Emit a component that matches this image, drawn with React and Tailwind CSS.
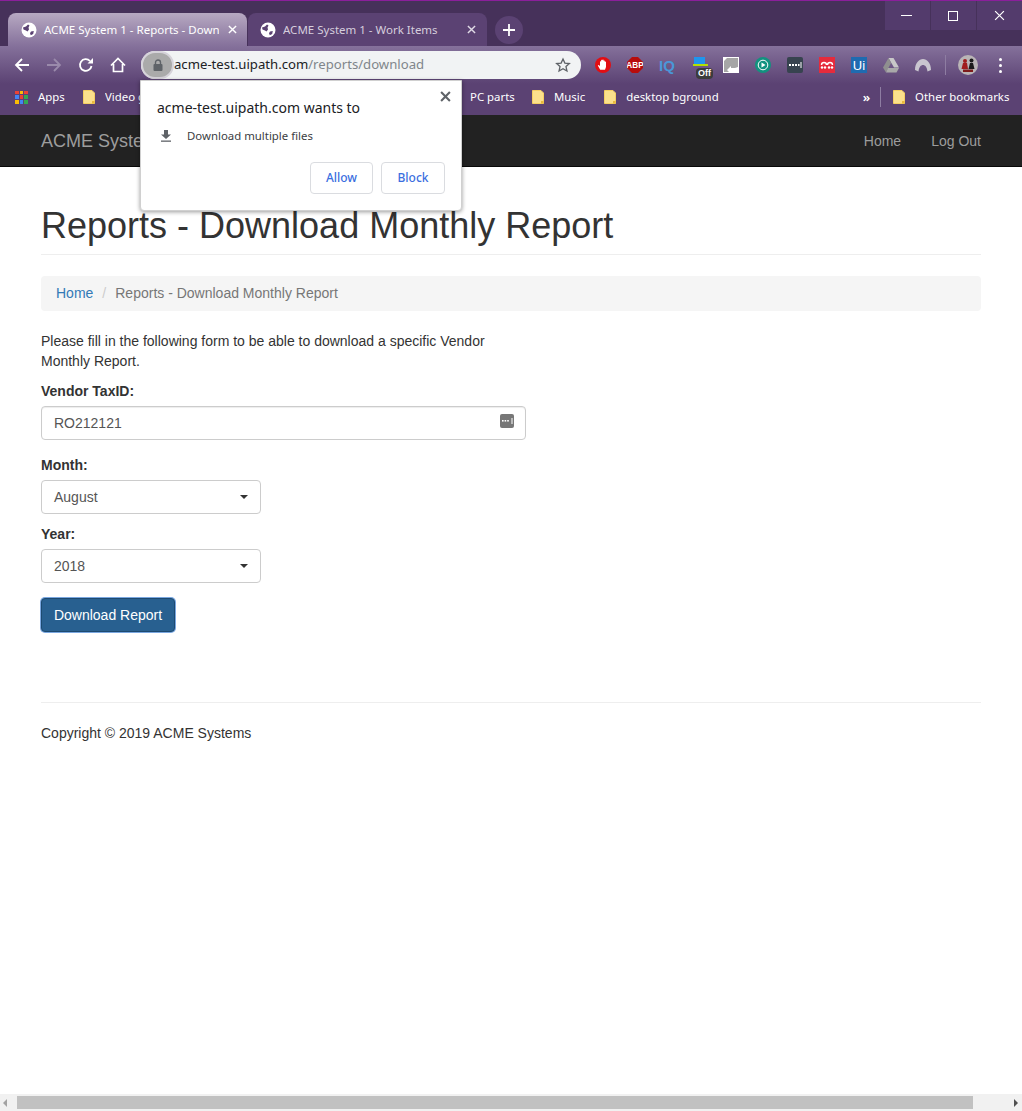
const UI = { fontFamily: '"Noto Sans", "Open Sans", sans-serif' };
const PAGE = { fontFamily: '"Liberation Sans", Arial, sans-serif' };

function Globe() {
  return (
    <svg width="16" height="16" viewBox="0 0 16 16" className="shrink-0">
      <circle cx="8" cy="8" r="7.5" fill="#fff" />
      <path d="M2 5.5 L5 4.5 L7 2.5 L8.5 3.5 L7.5 5.5 L8 7.5 L6.5 9.5 L5 8.5 L2.5 7.5Z M10 9.5 L12.8 9 L12.2 12 L9.8 13.2 L9 11.2Z" fill="#5b4273" />
    </svg>
  );
}

function CloseX({ size = 10, color = "#fff", width = 1.6 }) {
  return (
    <svg width={size} height={size} viewBox="0 0 10 10" className="shrink-0">
      <path d="M1 1 L9 9 M9 1 L1 9" stroke={color} strokeWidth={width} fill="none" />
    </svg>
  );
}

function Tab({ title, active }) {
  return (
    <div
      className={
        active
          ? "relative flex h-[33px] w-[239px] items-center rounded-t-lg bg-gradient-to-b from-[#b7a9c2] to-[#85719b] pl-[13px] pr-[10px]"
          : "flex h-[33px] w-[239px] items-center rounded-t-lg bg-[#5b4273] pl-[12px] pr-[11px]"
      }
    >
      <Globe />
      <span className={"ml-[7px] mr-[9px] flex-1 overflow-hidden whitespace-nowrap text-[11.5px] " + (active ? "text-white" : "text-[#d6cedd]")}>
        {title}
      </span>
      <CloseX size={9} color={active ? "#fff" : "#e0dae6"} />
    </div>
  );
}

function Folder() {
  return (
    <svg width="12" height="14" viewBox="0 0 12 14" className="shrink-0">
      <path d="M0.5 0.5 H9 L11.5 3 V13.5 H0.5Z" fill="#fbe08c" stroke="#f5cf62" />
      <rect x="9" y="11" width="2.5" height="2.5" fill="#e8b93c" />
    </svg>
  );
}

function Bookmark({ label, className = "", textClass = "" }) {
  return (
    <div className={"flex shrink-0 items-center gap-[10px] " + className}>
      <Folder />
      <span className={"whitespace-nowrap text-[11.4px] text-white " + textClass}>{label}</span>
    </div>
  );
}

function AppsGrid() {
  const colors = ["#ea4335", "#fbbc05", "#ea4335", "#4285f4", "#ea4335", "#34a853", "#fbbc05", "#4285f4", "#34a853"];
  return (
    <div className="grid h-[13px] w-[13px] shrink-0 grid-cols-3 gap-[1px]">
      {colors.map((c, i) => (
        <div key={i} style={{ background: c }} />
      ))}
    </div>
  );
}

function Extensions() {
  return (
    <div className="ml-[14px] flex items-center">
      <svg width="16" height="16" viewBox="0 0 16 16" className="shrink-0">
        <circle cx="8" cy="8" r="8" fill="#e20e13" />
        <path d="M5.2 12.8 L2.8 8.6 L3.6 8 L5 9 V4.6 A0.6 0.6 0 0 1 6.1 4.6 V3.4 A0.6 0.6 0 0 1 7.4 3.4 V7 V3.1 A0.6 0.6 0 0 1 8.6 3.1 V4 A0.6 0.6 0 0 1 9.8 4 V5 A0.6 0.6 0 0 1 11 5 V10 L10 12.8Z" fill="#fff" />
      </svg>
      <svg width="16" height="16" viewBox="0 0 16 16" className="ml-[16px] shrink-0">
        <path d="M5 0 H11 L16 5 V11 L11 16 H5 L0 11 V5Z" fill="#b80c0c" />
        <text x="8" y="11" textAnchor="middle" fontSize="8.2" fontWeight="700" fill="#fff" fontFamily="Liberation Sans">ABP</text>
      </svg>
      <span className="ml-[16px] w-[16px] text-center text-[15px] font-bold leading-none text-[#4a97d8]" style={PAGE}>IQ</span>
      <div className="relative ml-[18px] h-[16px] w-[16px] shrink-0">
        <div className="absolute left-[1px] top-0 h-[7px] w-[11px] bg-[#1f96ee]" />
        <div className="absolute left-0 top-[7px] h-[2px] w-[15px] bg-[#b4e000]" />
        <div className="absolute left-[3px] top-[11px] rounded-sm bg-[#3c3c3c] px-[2px] text-[9px] font-bold leading-[11px] text-white" style={PAGE}>Off</div>
      </div>
      <div className="ml-[14px] flex h-[16px] w-[16px] shrink-0 bg-white p-[1px]">
        <svg width="14" height="14" viewBox="0 0 14 14">
          <path d="M0 14 V3 L3 0 H14 V9 L11 10 H7 V8 L3 12 L5 14Z" fill="#a6a6a6" />
        </svg>
      </div>
      <svg width="16" height="16" viewBox="0 0 16 16" className="ml-[16px] shrink-0">
        <circle cx="8" cy="8" r="8" fill="#12927f" />
        <circle cx="8" cy="8" r="4.8" fill="none" stroke="#fff" strokeWidth="1" />
        <path d="M6.5 5.5 L10.5 8 L6.5 10.5Z" fill="#fff" />
      </svg>
      <svg width="16" height="16" viewBox="0 0 16 16" className="ml-[16px] shrink-0">
        <rect width="16" height="16" rx="2" fill="#37434f" />
        <rect x="2" y="7" width="2" height="2" fill="#fff" />
        <rect x="5" y="7" width="2" height="2" fill="#fff" />
        <rect x="8" y="7" width="2" height="2" fill="#fff" />
        <rect x="11" y="7" width="1.5" height="2" fill="#fff" />
        <rect x="13.5" y="5" width="1" height="6" fill="#fff" />
      </svg>
      <svg width="16" height="16" viewBox="0 0 16 16" className="ml-[16px] shrink-0">
        <rect width="16" height="16" fill="#e62b3c" />
        <path d="M2.5 8 A2.5 2.5 0 0 1 7.5 8 M8.5 8 A2.5 2.5 0 0 1 13.5 8" stroke="#fff" strokeWidth="1.4" fill="none" />
        <circle cx="3" cy="10.5" r="1.2" fill="#fff" />
        <circle cx="6" cy="10.5" r="1.2" fill="#fff" />
        <circle cx="10" cy="10.5" r="1.2" fill="#fff" />
        <circle cx="13" cy="10.5" r="1.2" fill="#fff" />
      </svg>
      <div className="ml-[16px] flex h-[16px] w-[16px] shrink-0 items-center justify-center bg-[#1f6bb0] text-[13px] leading-none text-white" style={PAGE}>Ui</div>
      <svg width="16" height="15" viewBox="0 0 16 15" className="ml-[16px] shrink-0">
        <path d="M5.5 0 H10.5 L16 9.5 H11Z" fill="#c8c8c8" />
        <path d="M5.5 0 L8 5 L3 14.5 L0 9.5Z" fill="#8f8f8f" />
        <path d="M5 10 H16 L13.5 14.5 H3Z" fill="#a9a9a9" />
      </svg>
      <svg width="16" height="14" viewBox="0 0 16 14" className="ml-[16px] shrink-0">
        <path d="M0 12 C0 5 4 1 8 1 C12 1 16 5 16 12 L12.5 13.5 C12 9 10 7 8 7 C6 7 4 9 3.5 13.5Z" fill="#c9c5cf" />
      </svg>
      <div className="ml-[14px] h-[20px] w-px bg-[#8e7da2]" />
      <svg width="20" height="20" viewBox="0 0 20 20" className="ml-[12px] shrink-0">
        <circle cx="10" cy="10" r="10" fill="#b9b4b6" />
        <circle cx="7" cy="6" r="2" fill="#a01c1c" />
        <path d="M3.5 14 L5 8 H9 L10 14Z" fill="#a01c1c" />
        <circle cx="13.5" cy="5.5" r="2" fill="#1a1a1a" />
        <path d="M10.5 14 L12 8 H15 L16.5 14Z" fill="#1a1a1a" />
        <rect x="5" y="14.5" width="10" height="2.5" fill="#7e1c1c" />
      </svg>
      <div className="ml-[21px] flex flex-col gap-[3px]">
        <div className="h-[3px] w-[3px] rounded-full bg-white" />
        <div className="h-[3px] w-[3px] rounded-full bg-white" />
        <div className="h-[3px] w-[3px] rounded-full bg-white" />
      </div>
    </div>
  );
}

function Toolbar() {
  return (
    <div className="flex h-[38px] items-center">
      <svg width="16" height="16" viewBox="0 0 16 16" className="ml-[14px] shrink-0">
        <path d="M15 8 H2 M8 2 L2 8 L8 14" stroke="#fff" strokeWidth="1.8" fill="none" />
      </svg>
      <svg width="16" height="16" viewBox="0 0 16 16" className="ml-[16px] shrink-0">
        <path d="M1 8 H14 M8 2 L14 8 L8 14" stroke="#9a8aab" strokeWidth="1.8" fill="none" />
      </svg>
      <svg width="16" height="16" viewBox="0 0 16 16" className="ml-[16px] shrink-0">
        <path d="M13.5 9 A5.8 5.8 0 1 1 12 4" stroke="#fff" strokeWidth="1.8" fill="none" />
        <path d="M9.5 6.5 H15 V1Z" fill="#fff" />
      </svg>
      <svg width="16" height="16" viewBox="0 0 16 16" className="ml-[16px] shrink-0">
        <path d="M1 8.5 L8 1.5 L15 8.5 M3.5 7 V14.5 H12.5 V7" stroke="#fff" strokeWidth="1.7" fill="none" />
      </svg>
      <div className="ml-[15px] flex h-[28px] w-[440px] shrink-0 items-center rounded-full bg-[#f1f3f4]">
        <div className="flex h-[28px] w-[33px] shrink-0 items-center justify-center rounded-full border-2 border-[#d6d3da] bg-[#aaaaaa]">
          <svg width="10" height="12" viewBox="0 0 10 12">
            <rect x="0.5" y="5" width="9" height="7" rx="1" fill="#5f6368" />
            <path d="M2.5 5.5 V3.5 A2.5 2.5 0 0 1 7.5 3.5 V5.5" stroke="#5f6368" strokeWidth="1.4" fill="none" />
          </svg>
        </div>
        <div className="flex-1 whitespace-nowrap text-[13.15px] text-[#202124]">
          acme-test.uipath.com<span className="text-[#80868b]">/reports/download</span>
        </div>
        <svg width="16" height="16" viewBox="0 0 24 24" className="mr-[10px] shrink-0">
          <path d="M12 3 L14.8 9.2 L21.5 9.9 L16.5 14.4 L17.9 21 L12 17.6 L6.1 21 L7.5 14.4 L2.5 9.9 L9.2 9.2Z" stroke="#5f6368" strokeWidth="2" fill="none" />
        </svg>
      </div>
      <Extensions />
    </div>
  );
}

function Bookmarks() {
  return (
    <div className="flex h-[31px] items-center bg-[#5b4273] pb-[5px]">
      <div className="ml-[15px]"><AppsGrid /></div>
      <span className="ml-[10px] w-[27px] whitespace-nowrap text-[11.4px] text-white">Apps</span>
      <Bookmark label="Video g" className="ml-[18px]" textClass="w-[36px] overflow-hidden" />
      <span className="ml-[329px] w-[44px] whitespace-nowrap text-[11.4px] text-white">PC parts</span>
      <Bookmark label="Music" className="ml-[18px]" />
      <Bookmark label="desktop bground" className="ml-[19px]" />
      <span className="ml-[144px] text-[13px] font-semibold leading-none text-white">»</span>
      <div className="ml-[10px] h-[20px] w-px bg-[#8e7da2]" />
      <Bookmark label="Other bookmarks" className="ml-[12px]" />
    </div>
  );
}

function Chrome() {
  return (
    <header style={UI} className="shrink-0 border-t border-[#8b1f9b] bg-[#46315a]">
      <div className="flex h-[45px] items-start">
        <div className="ml-[8px] mt-[12px] flex">
          <Tab title="ACME System 1 - Reports - Download" active />
          <div className="ml-px"><Tab title="ACME System 1 - Work Items" /></div>
          <div className="ml-[8px] mt-[3px] flex h-[28px] w-[28px] items-center justify-center rounded-full bg-[#5b4273]">
            <svg width="12" height="12" viewBox="0 0 12 12">
              <path d="M6 0 V12 M0 6 H12" stroke="#fff" strokeWidth="1.8" />
            </svg>
          </div>
        </div>
        <div className="ml-auto flex gap-px">
          <div className="flex h-[29px] w-[45px] items-center justify-center bg-[#533b6c] pr-[2px]">
            <div className="h-px w-[11px] bg-white" />
          </div>
          <div className="flex h-[29px] w-[45px] items-center justify-center bg-[#533b6c] pr-[2px]">
            <div className="h-[10px] w-[10px] border border-white" />
          </div>
          <div className="flex h-[29px] w-[45px] items-center justify-center bg-[#533b6c]">
            <CloseX size={11} color="#fff" width={1.1} />
          </div>
        </div>
      </div>
      <div className="bg-gradient-to-b from-[#85719b] to-[#5b4273]">
        <Toolbar />
      </div>
      <Bookmarks />
    </header>
  );
}

function Popup() {
  return (
    <div style={UI} className="absolute left-[140px] top-[80px] z-10 h-[131px] w-[322px] rounded-b-[4px] border border-[#d0d0d0] bg-white pl-[16px] pr-[16px] pt-[17px] shadow-[0_1px_4px_rgba(0,0,0,0.4)]">
      <div className="absolute right-[10px] top-[10px]">
        <CloseX size={11} color="#5f6368" width={1.9} />
      </div>
      <div className="text-[14px] leading-[20px] text-[#202124]">acme-test.uipath.com wants to</div>
      <div className="mt-[10px] flex items-center">
        <svg width="12" height="12" viewBox="0 0 12 12" className="ml-[3px] shrink-0">
          <path d="M4 0 H8 V4.5 H11 L6 9 L1 4.5 H4Z" fill="#5f6368" />
          <rect x="1" y="10.5" width="10" height="1.3" fill="#5f6368" />
        </svg>
        <span className="ml-[15px] text-[11.4px] leading-[16px] text-[#3c4043]">Download multiple files</span>
      </div>
      <div className="mt-[18px] flex justify-end gap-[8px]">
        <div className="flex h-[32px] w-[63px] items-center justify-center rounded-[4px] border border-[#dadce0] text-[12px] font-medium text-[#3b6fe0]">Allow</div>
        <div className="flex h-[32px] w-[64px] items-center justify-center rounded-[4px] border border-[#dadce0] text-[12px] font-medium text-[#3b6fe0]">Block</div>
      </div>
    </div>
  );
}

function SelectBox({ value }) {
  return (
    <div className="flex h-[34px] w-[220px] items-center justify-between rounded-[4px] border border-[#cccccc] bg-white pl-[12px] pr-[12px] text-[#555555]">
      <span>{value}</span>
      <div className="h-0 w-0 border-x-[4px] border-t-[4px] border-x-transparent border-t-[#333333]" />
    </div>
  );
}

function Label({ children, className = "" }) {
  return <div className={"h-[20px] font-bold text-[#333333] " + className}>{children}</div>;
}

function Content() {
  return (
    <main style={PAGE} className="flex-1 overflow-hidden bg-white px-[41px] text-[14px] leading-[20px] text-[#333333]">
      <div className="w-[940px]">
        <div className="mt-[39px] h-[49px] border-b border-[#eeeeee] text-[36px] leading-[40px] text-[#333333]">
          Reports - Download Monthly Report
        </div>
        <div className="mt-[21px] flex h-[35px] items-center rounded-[4px] bg-[#f5f5f5] px-[15px] pb-[2px]">
          <span className="text-[#337ab7]">Home</span>
          <span className="px-[9px] text-[#cccccc]">/</span>
          <span className="text-[#777777]">Reports - Download Monthly Report</span>
        </div>
        <div className="mt-[20px] w-[485px]">
          Please fill in the following form to be able to download a specific Vendor Monthly Report.
        </div>
        <Label className="mt-[10px]">Vendor TaxID:</Label>
        <div className="mt-[5px] flex h-[34px] w-[485px] items-center justify-between rounded-[4px] border border-[#cccccc] bg-white pl-[12px] pr-[11px] text-[#555555] shadow-[inset_0_1px_1px_rgba(0,0,0,0.075)]">
          <span>RO212121</span>
          <svg width="14" height="14" viewBox="0 0 14 14" className="mb-[4px] shrink-0">
            <rect width="14" height="14" rx="2" fill="#777777" />
            <rect x="2" y="6" width="1.6" height="1.6" fill="#fff" />
            <rect x="4.6" y="6" width="1.6" height="1.6" fill="#fff" />
            <rect x="7.2" y="6" width="1.6" height="1.6" fill="#fff" />
            <rect x="11.5" y="4" width="1" height="6" fill="#fff" />
          </svg>
        </div>
        <Label className="mt-[15px]">Month:</Label>
        <div className="mt-[5px]"><SelectBox value="August" /></div>
        <Label className="mt-[10px]">Year:</Label>
        <div className="mt-[5px]"><SelectBox value="2018" /></div>
        <div className="mt-[15px] flex h-[34px] w-[134px] items-center justify-center rounded-[4px] border border-[#1d4a70] bg-[#286090] text-white shadow-[0_0_0_1px_#7aa7e0]">
          Download Report
        </div>
        <div className="mt-[70px] border-t border-[#eeeeee] pt-[20px]">Copyright © 2019 ACME Systems</div>
      </div>
    </main>
  );
}

function Navbar() {
  return (
    <nav style={PAGE} className="flex h-[52px] shrink-0 items-center justify-between border-b border-[#080808] bg-[#222222] px-[41px] pt-[2px] text-[#9d9d9d]">
      <span className="text-[18px]">ACME System 1</span>
      <div className="flex gap-[30px] text-[14px]">
        <span>Home</span>
        <span>Log Out</span>
      </div>
    </nav>
  );
}

function Scrollbar() {
  return (
    <div className="flex h-[17px] shrink-0 items-center bg-[#f1f1f1]">
      <div className="ml-[3px] h-0 w-0 border-y-[4px] border-r-[4px] border-y-transparent border-r-[#a3a3a3]" />
      <div className="ml-[10px] h-[13px] w-[956px] bg-[#c1c1c1]" />
      <div className="ml-auto mr-[4px] h-0 w-0 border-y-[4px] border-l-[4px] border-y-transparent border-l-[#505050]" />
    </div>
  );
}

export default function App() {
  return (
    <div className="relative flex h-[1111px] w-[1022px] flex-col overflow-hidden bg-white">
      <Chrome />
      <Navbar />
      <Content />
      <Scrollbar />
      <Popup />
    </div>
  );
}
